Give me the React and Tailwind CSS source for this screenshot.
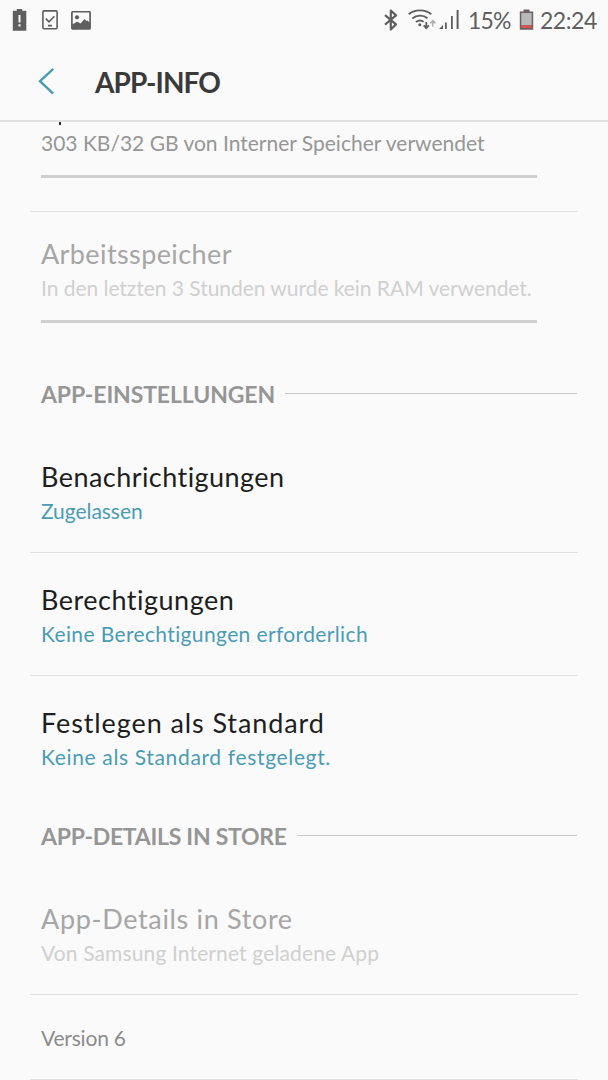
import React from 'react';

function StatusBar() {
  return (
    <div className="flex h-10 items-center justify-between pl-3 pr-[11px] text-[#5f5f5f]">
      <div className="flex items-center gap-[15px]">
        {/* Battery warning */}
        <svg width="15" height="22" viewBox="0 0 15 22" fill="currentColor">
          <path fillRule="evenodd" d="M4.8 0h5.4v1.8H14.3v19.9H.8V1.8h4zM6.5 6v7.6h2V6zM6.5 15.3v2.3h2v-2.3z" />
        </svg>
        {/* Phone with check mark */}
        <svg width="16" height="20" viewBox="0 0 16 20" fill="none" stroke="currentColor" strokeWidth="1.6">
          <rect x=".9" y=".9" width="14.2" height="17.8" rx="1" />
          <path d="M3.8 8.6l3.2 3.2 5.4-5.6M6 15.6h4" />
        </svg>
        {/* Picture */}
        <svg className="-ml-[2px]" width="20" height="19" viewBox="0 0 20 19" fill="none" stroke="currentColor">
          <rect x=".9" y=".7" width="18.2" height="17.2" rx="1" strokeWidth="1.7" />
          <circle cx="6" cy="6.3" r="2.1" fill="currentColor" stroke="none" />
          <path d="M1 18v-4.6l3-1.4 2-1.6 3.5 2L13.5 8l2 2 1-.6L19 12v6z" fill="currentColor" stroke="none" />
        </svg>
      </div>

      <div className="flex items-center">
        {/* Bluetooth */}
        <svg className="mr-[10px]" width="14" height="22" viewBox="0 0 14 22" fill="none" stroke="currentColor" strokeWidth="2.2" strokeLinejoin="round">
          <path d="M1 6.2l11 9.2-5.2 5.1V1.5L12 6.4 1 15.6" />
        </svg>
        {/* Wi-Fi with traffic arrows */}
        <svg className="mr-[2px]" width="29" height="22" viewBox="0 0 29 22" fill="none" stroke="currentColor" strokeWidth="1.9">
          <path d="M.8 5.3C6.5.1 17.5.1 23.2 5.3M4.3 9.4c4.4-3.7 10.9-3.7 15.2-.2M8 13.1c2.5-2 5.3-2 7.6-.3" />
          <circle cx="11.8" cy="15.8" r="1.5" fill="currentColor" stroke="none" />
          <path d="M18.3 13v6M15.7 16.3l2.6 2.8 2.6-2.8" strokeWidth="1.8" />
          <path d="M24.8 17.5V11.8M22.2 14.4l2.6-2.8 2.6 2.8" stroke="#b0b0b0" strokeWidth="1.6" />
        </svg>
        {/* Signal strength */}
        <svg className="mr-[8px]" width="21" height="22" viewBox="0 0 21 22" fill="currentColor">
          <path d="M0 20l4-4v4zM6 13.5h1.8V20H6zM12 7h1.8v13H12zM17.6 1h2v19h-2z" />
        </svg>
        <span className="w-[45px] whitespace-nowrap text-[23px] leading-8 tracking-[-0.8px]">15%</span>
        {/* Battery */}
        <svg className="ml-[6px] mr-[6px]" width="15" height="22" viewBox="0 0 15 22">
          <path d="M4.5.5h6v2h3.7v18.3H.8V2.5h3.7z" fill="#6a6262" />
          <rect x="2.3" y="4" width="10.4" height="12.2" fill="#b9b9b9" />
          <rect x="2.3" y="16.2" width="10.4" height="2.8" fill="#d9534f" />
        </svg>
        <span className="whitespace-nowrap text-[23px] leading-8 tracking-[-0.4px]">22:24</span>
      </div>
    </div>
  );
}

function Header() {
  return (
    <div className="flex h-[82px] items-center border-b-2 border-[#e2e2e2] pl-[38px]">
      <svg className="mt-px" width="18" height="28" viewBox="0 0 18 28" fill="none" stroke="#4a9cb5" strokeWidth="2.4">
        <path d="M15.2 1.8L2 14.2l13.2 12.4" />
      </svg>
      <h1 className="ml-[39px] pt-[3px] text-[28px] font-bold leading-8 tracking-[-0.93px] text-[#3a3a3a]">APP-INFO</h1>
    </div>
  );
}

function Section({ title, className, tracking }) {
  return (
    <div className={`flex items-center pl-[41px] pr-[31px] ${className}`}>
      <h2 className={`whitespace-nowrap pt-[2px] text-[23px] font-bold leading-8 text-[#969696] ${tracking}`}>{title}</h2>
      <div className="ml-[10px] h-px grow bg-[#c8c8c8]"></div>
    </div>
  );
}

function Divider() {
  return <div className="ml-[30px] mr-[30px] h-px bg-[#dfdfdf]"></div>;
}

function UsageBar() {
  return <div className="ml-[41px] mt-[14px] h-[3px] w-[496px] bg-[#d0d0d0]"></div>;
}

function Item({ title, sub, className = '', titleClass, subClass }) {
  return (
    <div className={`whitespace-nowrap pl-[41px] ${className}`}>
      <div className={`text-[27px] leading-8 ${titleClass}`}>{title}</div>
      <div className={`text-[21px] leading-9 ${subClass}`}>{sub}</div>
    </div>
  );
}

export default function App() {
  return (
    <div className="h-[1080px] w-[608px] overflow-hidden bg-[#fafafa] font-['Lato',sans-serif]">
      <StatusBar />
      <Header />

      <div className="h-[958px] overflow-hidden">
        {/* Descender of the title that is scrolled under the header */}
        <div className="ml-[59px] h-[3px] w-[2px] bg-[#2b2b2b]"></div>
        <div className="whitespace-nowrap pl-[41px] text-[21px] leading-9 text-[#969696]">
          303 KB/32 GB von Interner Speicher verwendet
        </div>
        <UsageBar />
        <div className="h-[33px]"></div>
        <Divider />
        <Item
          className="pt-[26px]"
          title="Arbeitsspeicher"
          sub="In den letzten 3 Stunden wurde kein RAM verwendet."
          titleClass="text-[#a6a6a6] tracking-[0.4px]"
          subClass="text-[#d0d0d0] tracking-[-0.04px]"
        />
        <UsageBar />

        <Section title="APP-EINSTELLUNGEN" className="mt-[53px] mb-[51px]" tracking="tracking-[-0.12px]" />
        <Item
          className="pb-[23px]"
          title="Benachrichtigungen"
          sub="Zugelassen"
          titleClass="text-[#1e1e1e] tracking-[0.45px]"
          subClass="text-[#4a9cb5] tracking-[-0.05px]"
        />
        <Divider />
        <Item
          className="pt-[31px] pb-[23px]"
          title="Berechtigungen"
          sub="Keine Berechtigungen erforderlich"
          titleClass="text-[#1e1e1e] tracking-[0.5px]"
          subClass="text-[#4a9cb5] tracking-[0.37px]"
        />
        <Divider />
        <Item
          className="pt-[31px]"
          title="Festlegen als Standard"
          sub="Keine als Standard festgelegt."
          titleClass="text-[#1e1e1e] tracking-[0.9px]"
          subClass="text-[#4a9cb5] tracking-[0.65px]"
        />

        <Section title="APP-DETAILS IN STORE" className="mt-[43px] mb-[51px]" tracking="tracking-[-0.27px]" />
        <Item
          className="pb-[23px]"
          title="App-Details in Store"
          sub="Von Samsung Internet geladene App"
          titleClass="text-[#a6a6a6] tracking-[0.66px]"
          subClass="text-[#d0d0d0] tracking-[0.13px]"
        />
        <Divider />
        <div className="pt-[25px] pb-[23px] pl-[41px] text-[21px] leading-9 tracking-[-0.2px] text-[#8c8c8c]">Version 6</div>
        <Divider />
      </div>
    </div>
  );
}
